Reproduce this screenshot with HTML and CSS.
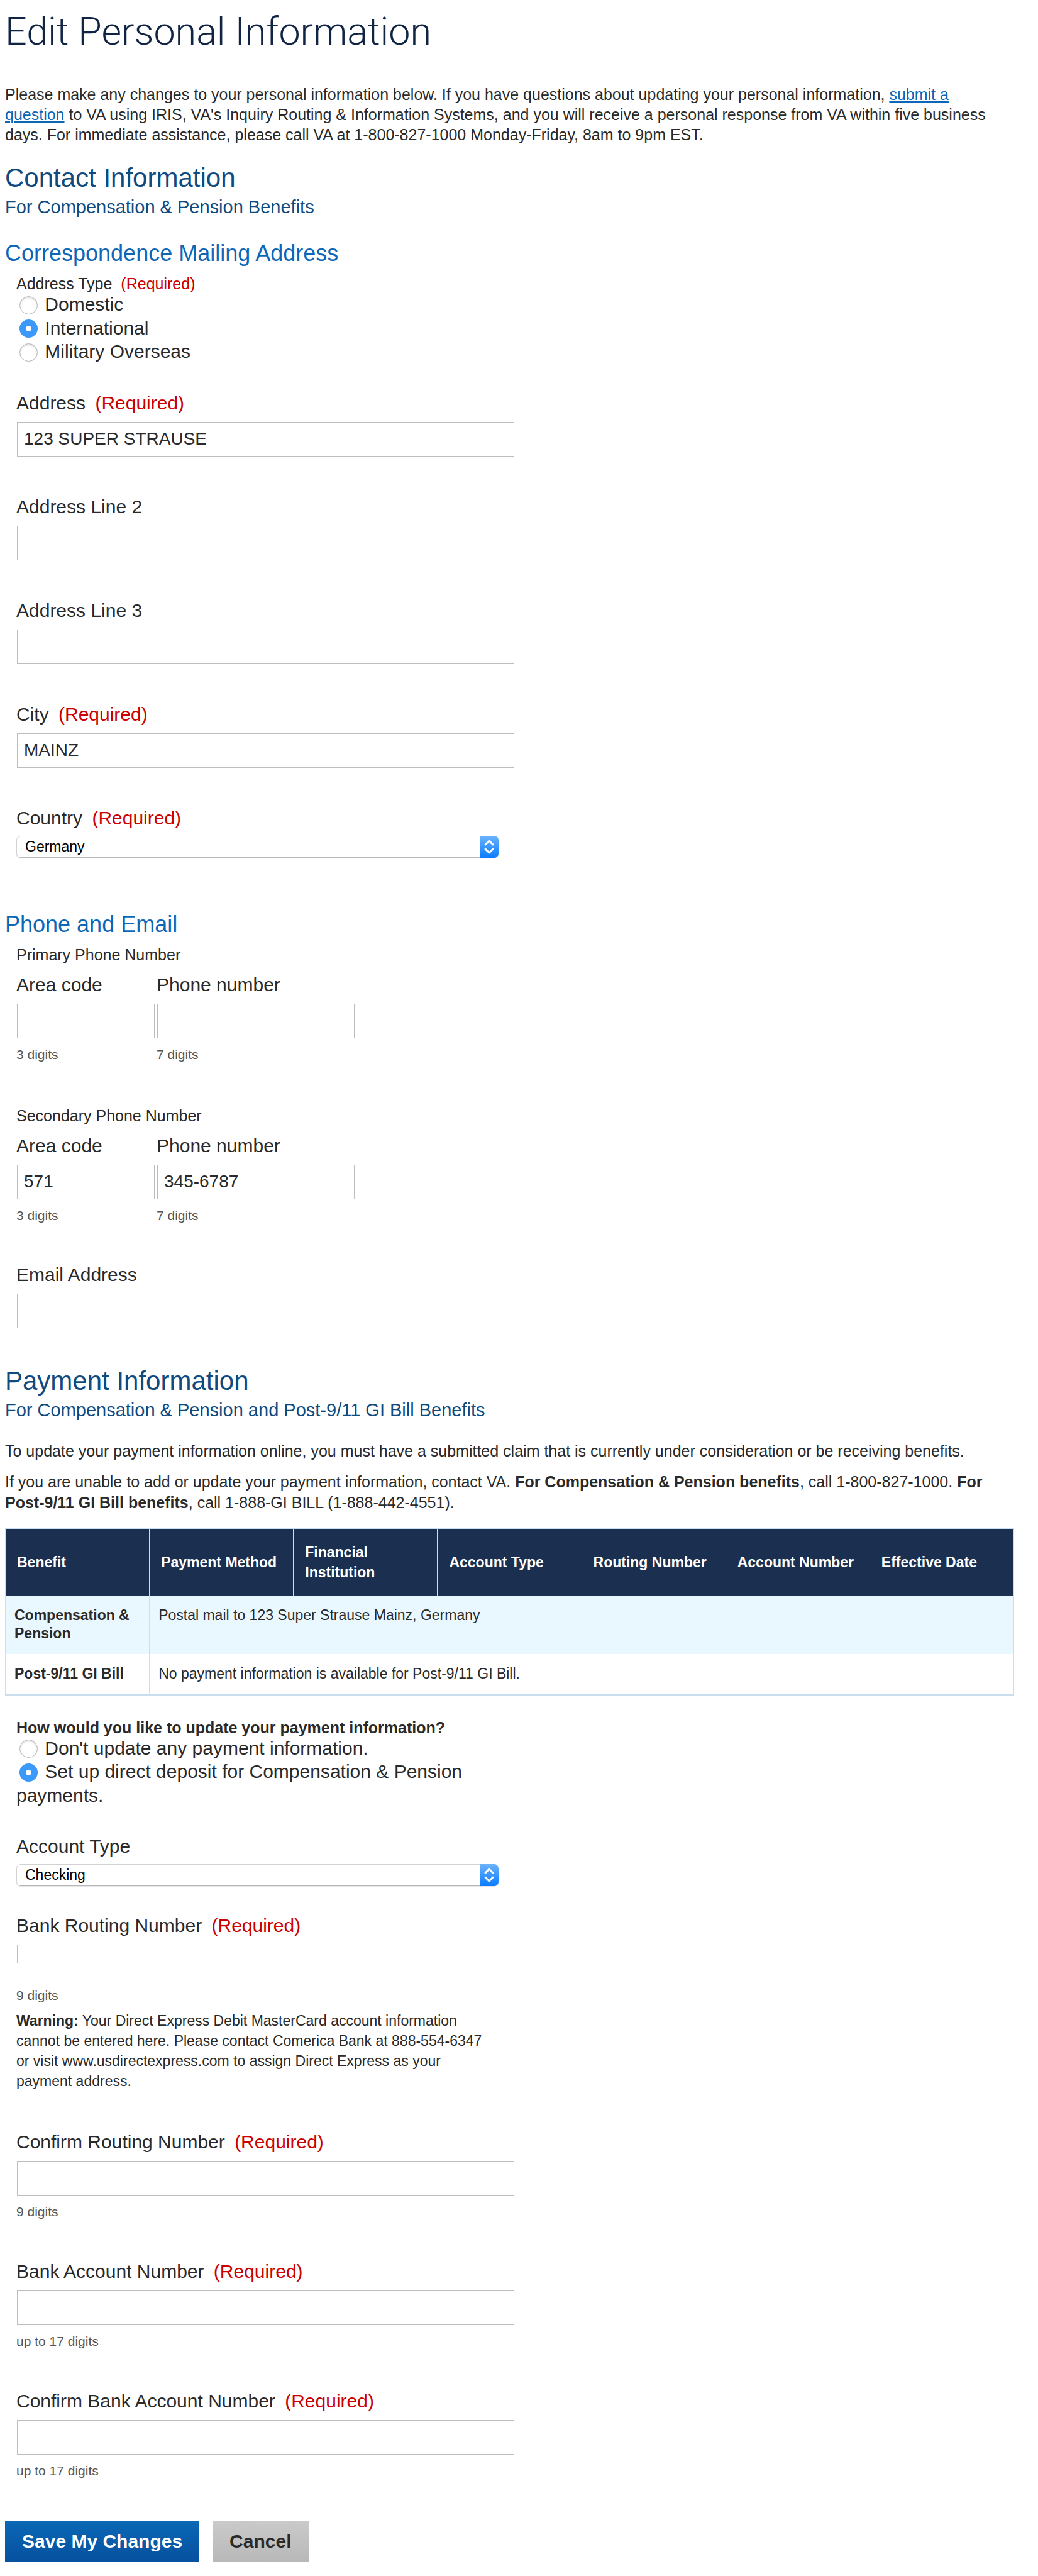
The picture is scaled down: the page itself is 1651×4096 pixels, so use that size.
FILE: index.html
```html
<!DOCTYPE html>
<html lang="en">
<head>
<meta charset="utf-8">
<meta name="viewport" content="width=device-width, initial-scale=1">
<title>Edit Personal Information</title>
<link rel="stylesheet" href="styles.css">
</head>
<body>
<main class="page">
  <h1 class="page-title">Edit Personal Information</h1>
  <p class="intro">Please make any changes to your personal information below. If you have questions about updating your personal information, <a href="#">submit a question</a> to VA using IRIS, VA's Inquiry Routing &amp; Information Systems, and you will receive a personal response from VA within five business days. For immediate assistance, please call VA at 1-800-827-1000 Monday-Friday, 8am to 9pm EST.</p>

  <form>
    <section class="contact">
      <h2>Contact Information</h2>
      <p class="benefits">For Compensation &amp; Pension Benefits</p>

      <h3>Correspondence Mailing Address</h3>
      <div class="fields">
        <fieldset class="choices">
          <legend>Address Type <span class="required">(Required)</span></legend>
          <label class="choice"><input type="radio" name="address-type"> Domestic</label>
          <label class="choice"><input type="radio" name="address-type" checked> International</label>
          <label class="choice"><input type="radio" name="address-type"> Military Overseas</label>
        </fieldset>
        <div class="field">
          <label for="address1">Address <span class="required">(Required)</span></label>
          <input type="text" id="address1" value="123 SUPER STRAUSE">
        </div>
        <div class="field">
          <label for="address2">Address Line 2</label>
          <input type="text" id="address2">
        </div>
        <div class="field">
          <label for="address3">Address Line 3</label>
          <input type="text" id="address3">
        </div>
        <div class="field">
          <label for="city">City <span class="required">(Required)</span></label>
          <input type="text" id="city" value="MAINZ">
        </div>
        <div class="field">
          <label for="country">Country <span class="required">(Required)</span></label>
          <div class="select">
            <select id="country"><option>Germany</option></select>
            <svg class="select-arrows" viewBox="0 0 30 35" aria-hidden="true"><path d="M9 14l6-6 6 6M9 21l6 6 6-6"/></svg>
          </div>
        </div>
      </div>

      <h3 class="phone-title">Phone and Email</h3>
      <div class="fields">
        <fieldset class="phone">
          <legend>Primary Phone Number</legend>
          <div class="phone-parts">
            <div class="field area">
              <label for="area1">Area code</label>
              <input type="text" id="area1">
              <p class="hint">3 digits</p>
            </div>
            <div class="field number">
              <label for="phone1">Phone number</label>
              <input type="text" id="phone1">
              <p class="hint">7 digits</p>
            </div>
          </div>
        </fieldset>
        <fieldset class="phone">
          <legend>Secondary Phone Number</legend>
          <div class="phone-parts">
            <div class="field area">
              <label for="area2">Area code</label>
              <input type="text" id="area2" value="571">
              <p class="hint">3 digits</p>
            </div>
            <div class="field number">
              <label for="phone2">Phone number</label>
              <input type="text" id="phone2" value="345-6787">
              <p class="hint">7 digits</p>
            </div>
          </div>
        </fieldset>
        <div class="field">
          <label for="email">Email Address</label>
          <input type="text" id="email">
        </div>
      </div>
    </section>

    <section class="payment">
      <h2>Payment Information</h2>
      <p class="benefits">For Compensation &amp; Pension and Post-9/11 GI Bill Benefits</p>
      <p class="note">To update your payment information online, you must have a submitted claim that is currently under consideration or be receiving benefits.</p>
      <p class="note">If you are unable to add or update your payment information, contact VA. <strong>For Compensation &amp; Pension benefits</strong>, call 1-800-827-1000. <strong>For Post-9/11 GI Bill benefits</strong>, call 1-888-GI BILL (1-888-442-4551).</p>

      <table class="accounts">
        <thead>
          <tr>
            <th scope="col">Benefit</th>
            <th scope="col">Payment Method</th>
            <th scope="col">Financial Institution</th>
            <th scope="col">Account Type</th>
            <th scope="col">Routing Number</th>
            <th scope="col">Account Number</th>
            <th scope="col">Effective Date</th>
          </tr>
        </thead>
        <tbody>
          <tr>
            <th scope="row">Compensation &amp; Pension</th>
            <td colspan="6">Postal mail to 123 Super Strause Mainz, Germany</td>
          </tr>
          <tr>
            <th scope="row">Post-9/11 GI Bill</th>
            <td colspan="6">No payment information is available for Post-9/11 GI Bill.</td>
          </tr>
        </tbody>
      </table>

      <div class="fields">
        <fieldset class="choices">
          <legend class="question">How would you like to update your payment information?</legend>
          <label class="choice"><input type="radio" name="update"> Don't update any payment information.</label>
          <label class="choice"><input type="radio" name="update" checked> Set up direct deposit for Compensation &amp; Pension payments.</label>
        </fieldset>
        <div class="field account-type">
          <label for="account-type">Account Type</label>
          <div class="select">
            <select id="account-type"><option>Checking</option></select>
            <svg class="select-arrows" viewBox="0 0 30 35" aria-hidden="true"><path d="M9 14l6-6 6 6M9 21l6 6 6-6"/></svg>
          </div>
        </div>
        <div class="field">
          <label for="routing">Bank Routing Number <span class="required">(Required)</span></label>
          <input type="text" id="routing" class="clipped">
          <p class="hint">9 digits</p>
          <p class="warning"><strong>Warning:</strong> Your Direct Express Debit MasterCard account information cannot be entered here. Please contact Comerica Bank at 888-554-6347 or visit www.usdirectexpress.com to assign Direct Express as your payment address.</p>
        </div>
        <div class="field">
          <label for="routing2">Confirm Routing Number <span class="required">(Required)</span></label>
          <input type="text" id="routing2">
          <p class="hint">9 digits</p>
        </div>
        <div class="field">
          <label for="account">Bank Account Number <span class="required">(Required)</span></label>
          <input type="text" id="account">
          <p class="hint">up to 17 digits</p>
        </div>
        <div class="field">
          <label for="account2">Confirm Bank Account Number <span class="required">(Required)</span></label>
          <input type="text" id="account2">
          <p class="hint">up to 17 digits</p>
        </div>
      </div>
    </section>

    <div class="actions">
      <button type="submit" class="button save">Save My Changes</button>
      <button type="button" class="button cancel">Cancel</button>
    </div>
  </form>
</main>
</body>
</html>
```
FILE: styles.css
```css
* {
  box-sizing: border-box;
}

body {
  margin: 0;
  background: #fff;
  color: #2a2a2a;
  font: 25px/32px "Liberation Sans", Arial, sans-serif;
}

h1, h2, h3, p, fieldset, legend {
  margin: 0;
  padding: 0;
  border: 0;
  font-weight: 400;
}

.page {
  padding: 14px 38px 22px 8px;
}

.page-title {
  margin-bottom: 48px;
  color: #112444;
  font: 300 61px/72px Roboto, "Liberation Sans", sans-serif;
}

.intro {
  padding-right: 24px;
}

a {
  color: #0d67b8;
}

h2 {
  color: #104b7f;
  font-size: 42px;
  line-height: 50px;
}

h3 {
  margin-top: 31px;
  color: #0d67b8;
  font-size: 36px;
  line-height: 44px;
}

.benefits {
  color: #104b7f;
  font-size: 29px;
  line-height: 42px;
}

.contact {
  margin-top: 28px;
}

.phone-title {
  margin-top: 84px;
}

.payment {
  margin-top: 59px;
}

/* Form fields */

.fields {
  max-width: 785px;
  padding: 10px 0 0 18px;
}

.choices {
  margin-bottom: 43px;
}

.payment .choices {
  margin-bottom: 46px;
}

.choice {
  display: block;
  font-size: 30px;
  line-height: 34px;
}

.choice input {
  appearance: none;
  width: 29px;
  height: 29px;
  margin: 3px 3px 5px 5px;
  border: 1px solid #b4b4b4;
  border-radius: 50%;
  background: #fff;
  box-shadow: inset 0 2px 3px #ddd;
  vertical-align: middle;
}

.choice input:checked {
  border: 0;
  background: radial-gradient(circle, #fff 4px, #3b99fc 5px);
  box-shadow: none;
}

.question {
  font-weight: 700;
}

.required {
  margin-left: 7px;
  color: #c00;
}

.field + .field,
.phone + .field {
  margin-top: 62px;
}

.field:has(.hint) + .field {
  margin-top: 63px;
}

.field label {
  display: block;
  font-size: 30px;
  line-height: 36px;
}

.field input {
  display: block;
  width: 791px;
  max-width: calc(100vw - 52px);
  height: 55px;
  margin: 12px 0 0 1px;
  padding: 0 10px;
  border: 1px solid #bdbdbd;
  border-radius: 0;
  background: #fff;
  color: #2a2a2a;
  font: 28px "Liberation Sans", Arial, sans-serif;
}

.field .clipped {
  height: 30px;
  margin-bottom: 37px;
  border-bottom: 0;
}

.hint {
  margin-top: 12px;
  color: #555;
  font-size: 21px;
  line-height: 28px;
}

.warning {
  margin-top: 10px;
  font-size: 23px;
}

.select {
  position: relative;
  height: 35px;
  margin-top: 10px;
}

.select select {
  appearance: none;
  width: 100%;
  height: 35px;
  padding: 0 40px 0 13px;
  border: 1px solid #d2d2d2;
  border-bottom-color: #b8b8b8;
  border-radius: 7px;
  background: #fff;
  box-shadow: 0 1px 1px #e4e4e4;
  color: #000;
  font: 23px "Liberation Sans", Arial, sans-serif;
}

.select-arrows {
  position: absolute;
  top: 0;
  right: 0;
  width: 30px;
  height: 35px;
  border-radius: 0 7px 7px 0;
  background: linear-gradient(#6cb3fa, #0a7bff);
  fill: none;
  stroke: #fff;
  stroke-width: 3;
  stroke-linecap: round;
  stroke-linejoin: round;
  pointer-events: none;
}

.account-type + .field:has(.hint) {
  margin-top: 45px;
}

.phone + .phone {
  margin-top: 67px;
}

.phone-parts {
  display: flex;
  padding-top: 14px;
}

.phone-parts .field.number {
  margin-top: 0;
}

.phone-parts .area {
  width: 223px;
}

.phone-parts .area input {
  width: 219px;
}

.phone-parts .number input {
  width: 314px;
}

/* Payment details */

.note {
  margin-top: 28px;
}

.note + .note {
  margin-top: 17px;
  line-height: 33px;
}

.accounts {
  width: 100%;
  margin: 23px 0 25px;
  border: 1px solid #c9dff0;
  border-width: 2px 1px;
  border-collapse: collapse;
  table-layout: fixed;
  font-size: 23px;
  line-height: 29px;
  text-align: left;
}

.accounts th,
.accounts td {
  padding: 17px 14px 18px;
  border-left: 1px solid #c9dff0;
  vertical-align: top;
}

.accounts thead th {
  height: 107px;
  padding: 0 4px 0 18px;
  background: #1b2f50;
  color: #fff;
  line-height: 32px;
  vertical-align: middle;
}

.accounts tbody tr:first-child {
  background: #e9f7ff;
}

/* Buttons */

.actions {
  display: flex;
  gap: 21px;
  margin-top: 65px;
}

.button {
  height: 66px;
  padding: 0 27px;
  border: 0;
  font: 700 30px "Liberation Sans", Arial, sans-serif;
}

.save {
  background: linear-gradient(#0a68b5, #06509f);
  color: #fff;
}

.cancel {
  background: linear-gradient(#cacaca, #b8b8b8);
  color: #2a2a2a;
}
```
